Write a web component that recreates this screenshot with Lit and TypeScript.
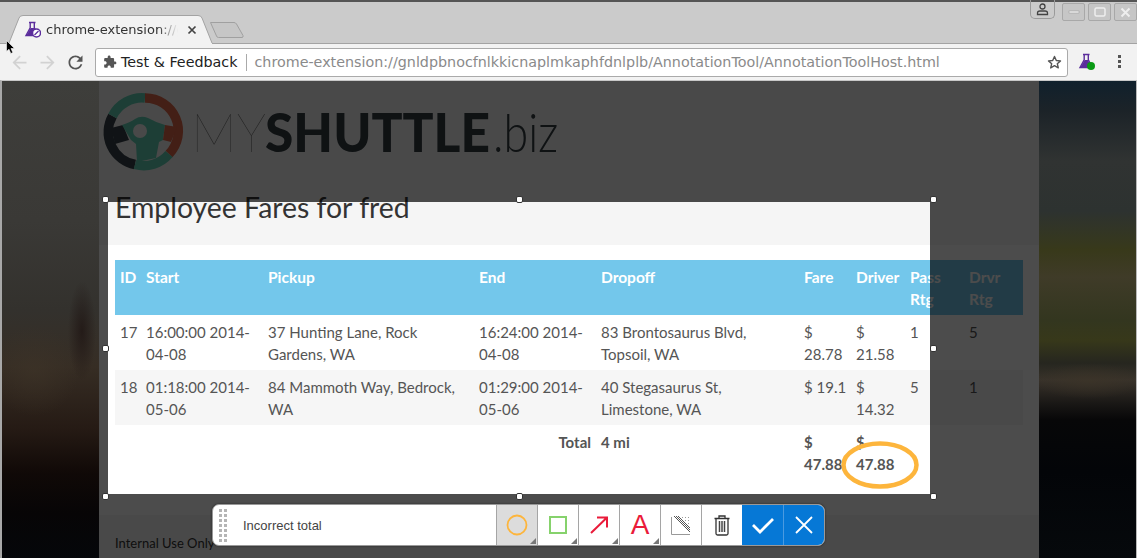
import { LitElement, html, css, svg } from "lit";
import { customElement } from "lit/decorators.js";

const rows = [
  { band: false, id: "17", start: "16:00:00 2014-04-08", pickup: "37 Hunting Lane, Rock Gardens, WA", end: "16:24:00 2014-04-08", drop: "83 Brontosaurus Blvd, Topsoil, WA", fare: "$ 28.78", driver: "$ 21.58", pass: "1", drvr: "5" },
  { band: true, id: "18", start: "01:18:00 2014-05-06", pickup: "84 Mammoth Way, Bedrock, WA", end: "01:29:00 2014-05-06", drop: "40 Stegasaurus St, Limestone, WA", fare: "$ 19.1", driver: "$ 14.32", pass: "5", drvr: "1" },
];

const flask = svg`<path d="M5 1.500h6.500M6.200 1.500v5.300L2 14.500h12.500L10.300 6.800V1.500" fill="none" stroke="#5b2d9c" stroke-width="1.400"/><path d="M6.700 7h3.100l4.700 8H2z" fill="#5b2d9c"/>`;

@customElement("app-root")
export class AppRoot extends LitElement {
  static styles = css`
    :host { display: block; width: 1137px; height: 558px; overflow: hidden; position: relative; font-family: "DejaVu Sans", sans-serif; background: #ccc; }
    .frame { display: flex; flex-direction: column; height: 558px; }
    .strip { height: 43px; flex: none; background: #cbcbcb; border-top: 2px solid #555; box-sizing: border-box; display: flex; align-items: flex-end; padding-left: 7px; position: relative; }
    .tab { width: 206px; height: 29px; position: relative; display: flex; align-items: center; box-sizing: border-box; padding: 0 0 0 17px; margin-bottom: -1px; z-index: 1; }
    .tab > svg.shape { position: absolute; left: 0; top: 0; }
    .tab .ticon { position: relative; flex: none; margin-right: 5px; }
    .title { position: relative; font-size: 13px; color: #333; width: 132px; overflow: hidden; white-space: nowrap; -webkit-mask-image: linear-gradient(90deg, #000 85%, transparent); mask-image: linear-gradient(90deg, #000 85%, transparent); }
    .x { position: relative; margin-left: 9px; flex: none; }
    .newtab { margin-left: -4px; margin-bottom: 4px; flex: none; display: block; }
    .winbtns { position: absolute; right: 0; top: -2px; display: flex; gap: 3px; align-items: flex-start; }
    .prof { width: 25px; height: 19px; margin-right: 4px; border: 1px solid #9a9a9a; border-top: none; border-radius: 0 0 5px 5px; box-sizing: border-box; display: flex; align-items: center; justify-content: center; }
    .wb { width: 23px; height: 18px; margin-top: 3px; border: 1px solid #a8a8a8; border-radius: 2px; box-sizing: border-box; background: #c6c6c6; display: flex; align-items: center; justify-content: center; }
    .toolbar { height: 37px; flex: none; background: #f2f2f2; border-top: 1px solid #a3a3a3; box-sizing: border-box; display: flex; align-items: center; padding-left: 9px; }
    .nav { display: block; flex: none; margin-right: 7px; }
    .nav.last { margin-right: 0; }
    .omni { margin-left: 9px; width: 973px; height: 29px; flex: none; background: #fff; border: 1px solid #aaa; border-radius: 3px; box-sizing: border-box; display: flex; align-items: center; padding: 0 5px 0 7px; font-size: 14.3px; white-space: nowrap; }
    .site { color: #222; margin-left: 4px; }
    .sep { width: 1px; height: 17px; background: #aaa; margin: 0 7px 0 9px; flex: none; }
    .url { color: #8a8a8a; flex: 1; }
    .ext { margin-left: 10px; flex: none; display: block; }
    .menu { margin-left: 22px; flex: none; display: block; }
    .stage { flex: 1; display: flex; min-height: 0; background: #000; border-left: 2px solid #a8a8a8; border-right: 1px solid #b8b8b8; border-top: 1px solid #c8c8c8; }
    .side { flex: none; }
    .left { width: 97px; background:
      radial-gradient(ellipse 14px 50px at 80px 250px, rgba(30,20,18,.75), transparent),
      radial-gradient(ellipse 45px 45px at 32px 290px, rgba(62,52,40,.6), transparent),
      linear-gradient(180deg, #3e3e3b 0, #3a3936 140px, #33312d 229px, #362d24 286px, #251a14 349px, #100907 392px, #070506 432px, #05070a 477px); }
    .right { flex: 1; background:
      radial-gradient(ellipse 55px 18px at 50px 300px, rgba(60,52,40,.7), transparent),
      linear-gradient(180deg, #10202c 0, #1c2328 30px, #303332 80px, #2d3230 130px, #38391a 169px, #3f3b28 196px, #33361f 239px, #37381a 259px, #26261f 282px, #38322a 299px, #1a1816 322px, #070708 339px, #030508 390px, #06090c 477px); }
    .page { width: 940px; flex: none; position: relative; overflow: hidden; background: #fff; color: #555; font-family: "Lato", sans-serif; font-size: 15px; line-height: 22px; }
    .band { background: #f5f5f5; height: 164px; box-sizing: border-box; padding: 11px 0 0 4px; }
    .logo { display: block; }
    h1 { margin: 14px 0 0 12px; font-weight: 400; font-size: 28.4px; line-height: 34px; color: #333; }
    .content { padding: 15px 16px 0; }
    table { border-collapse: collapse; table-layout: fixed; width: 908px; }
    th { background: #73c7eb; color: #fff; text-align: left; font-weight: 700; height: 55px; font-size: 15.5px; }
    th, td { padding: 6px 5px 5px; vertical-align: top; box-sizing: border-box; }
    td.fare { padding-right: 2px; }
    tr.alt td { background: #f6f6f6; }
    .num { text-align: right; }
    .b { font-weight: 700; }
    .footer { position: absolute; left: 0; right: 0; top: 434px; bottom: 0; background: #f5f5f5; padding: 17px 16px 0; color: #333; font-size: 13px; }
    .cut { position: absolute; left: 9px; top: 121px; width: 822px; height: 292px; box-shadow: 0 0 0 1400px rgba(0,0,0,.7); }
    .h { position: absolute; width: 7px; height: 7px; box-sizing: border-box; background: #fff; border: 1.5px solid #333; border-radius: 2px; }
    .hl { left: -6px; } .hc { left: 408px; } .hr { left: 822px; }
    .ht { top: -6px; } .hm { top: 143px; } .hb { top: 291px; }
    .ell { position: absolute; left: 733px; top: 239px; display: block; }
    .tools { position: absolute; left: 113px; top: 423px; width: 613px; height: 42px; box-sizing: border-box; border: 1px solid #999; border-radius: 7px; background: #fff; box-shadow: 0 0 2px #222; display: flex; overflow: hidden; font-family: "Liberation Sans", sans-serif; }
    .grip { width: 30px; flex: none; display: grid; grid-template-columns: 3px 3px; grid-auto-rows: 3px; gap: 2px 2px; padding: 4px 0 0 6px; box-sizing: border-box; align-content: start; }
    .grip i { background: #b5b5b5; display: block; }
    .note { width: 253px; flex: none; font-size: 13px; line-height: 41px; color: #444; }
    .cell { width: 41px; flex: none; border-left: 1px solid #a5a5a5; box-sizing: border-box; position: relative; display: flex; align-items: center; justify-content: center; }
    .cell.on { background: #dcdcdc; }
    .cell.more::after { content: ""; position: absolute; right: 1px; bottom: 1px; border-style: solid; border-width: 0 0 6px 6px; border-color: transparent transparent #777 transparent; }
    .cell.blue { background: #0678d6; border-left-color: #4a9ae0; }
    .cell.first { border-left: none; }
    .letter { font-size: 28px; line-height: 40px; color: #ea1b3a; }
    .cursor { position: absolute; left: 6px; top: 40px; display: block; z-index: 5; }
  `;

  render() {
    const grip = Array.from({ length: 14 }, () => html`<i></i>`);
    return html`
      <div class="frame">
        <div class="strip">
          <div class="tab">
            <svg class="shape" width="206" height="29"><path d="M0 29 L2 28 L12 3 Q13 .5 16 .5 H191 Q194 .5 195 3 L205 28 L206 29 Z" fill="#f2f2f2" stroke="#a3a3a3"/><rect x="1" y="28" width="204" height="2" fill="#f2f2f2"/></svg>
            <svg class="ticon" width="17" height="17" viewBox="0 0 17 17">${flask}<circle cx="12.500" cy="12" r="4" fill="#fff" stroke="#5b2d9c" stroke-width="1.500"/><path d="M10.500 14 14.500 10" stroke="#5b2d9c" stroke-width="1.200"/></svg>
            <span class="title">chrome-extension://gnldpb</span>
            <svg class="x" width="10" height="10" viewBox="0 0 10 10"><path d="M1.500 1.500l7 7M8.500 1.500l-7 7" stroke="#444" stroke-width="1.700"/></svg>
          </div>
          <svg class="newtab" width="36" height="18" viewBox="0 0 36 18"><path d="M1.500 1.500H25Q26.500 1.500 27.500 3L34 14.500Q34.500 16.500 33 16.500H9.500Q8 16.500 7.500 15Z" fill="#c6c6c6" stroke="#a0a0a0"/></svg>
          <div class="winbtns">
            <div class="prof"><svg width="13" height="13" viewBox="0 0 13 13"><circle cx="6.500" cy="3.500" r="2.500" fill="none" stroke="#444" stroke-width="1.300"/><path d="M1.500 11.500V10Q1.500 8 4 8H9Q11.500 8 11.500 10V11.500Z" fill="none" stroke="#444" stroke-width="1.300"/></svg></div>
            <div class="wb"><svg width="12" height="4"><rect x="1" y="1" width="10" height="2" fill="#eee" stroke="#999" stroke-width=".5"/></svg></div>
            <div class="wb"><svg width="12" height="10"><rect x="1" y="1" width="10" height="8" rx="1.500" fill="none" stroke="#eee" stroke-width="1.500"/></svg></div>
            <div class="wb"><svg width="11" height="11"><path d="M1.500 1.500l8 8M9.500 1.500l-8 8" stroke="#eee" stroke-width="2"/></svg></div>
          </div>
        </div>
        <div class="toolbar">
          <svg class="nav" width="21" height="21" viewBox="0 0 24 24"><path fill="#d2d2d2" d="M20 11H7.830l5.590-5.590L12 4l-8 8 8 8 1.410-1.410L7.830 13H20v-2z"/></svg>
          <svg class="nav" width="21" height="21" viewBox="0 0 24 24"><path fill="#d2d2d2" d="M4 11h12.170l-5.590-5.590L12 4l8 8-8 8-1.410-1.410L16.170 13H4v-2z"/></svg>
          <svg class="nav last" width="21" height="21" viewBox="0 0 24 24"><path fill="#555" d="M17.650 6.350C16.200 4.900 14.210 4 12 4c-4.420 0-7.990 3.580-7.990 8s3.570 8 7.990 8c3.730 0 6.840-2.550 7.730-6h-2.080c-.82 2.330-3.040 4-5.650 4-3.310 0-6-2.690-6-6s2.690-6 6-6c1.660 0 3.140.69 4.220 1.780L13 11h7V4l-2.350 2.350z"/></svg>
          <div class="omni">
            <svg width="14" height="14" viewBox="0 0 24 24"><path fill="#555" d="M20.500 11H19V7c0-1.100-.9-2-2-2h-4V3.500C13 2.120 11.880 1 10.500 1S8 2.120 8 3.500V5H4c-1.100 0-1.990.9-1.990 2v3.800H3.500c1.490 0 2.700 1.210 2.700 2.700s-1.210 2.700-2.700 2.700H2V20c0 1.100.9 2 2 2h3.800v-1.500c0-1.490 1.210-2.700 2.700-2.700 1.490 0 2.700 1.210 2.700 2.700V22H17c1.100 0 2-.9 2-2v-4h1.500c1.380 0 2.500-1.120 2.500-2.500S21.880 11 20.500 11z"/></svg>
            <span class="site">Test &amp; Feedback</span><span class="sep"></span>
            <span class="url">chrome-extension://gnldpbnocfnlkkicnaplmkaphfdnlplb/AnnotationTool/AnnotationToolHost.html</span>
            <svg width="15" height="15" viewBox="0 0 15 15"><path d="M7.500 1.500l1.800 4 4.200.4-3.200 2.800 1 4.200-3.800-2.300-3.800 2.300 1-4.200L1.500 5.900l4.200-.4z" fill="none" stroke="#555" stroke-width="1.400" stroke-linejoin="round"/></svg>
          </div>
          <svg class="ext" width="18" height="18" viewBox="0 0 18 18">${flask}<circle cx="13" cy="13" r="4" fill="#0a9a14"/></svg>
          <svg class="menu" width="4" height="14" viewBox="0 0 4 14"><g fill="#555"><rect x="0" y="0" width="3" height="3"/><rect x="0" y="5" width="3" height="3"/><rect x="0" y="10" width="3" height="3"/></g></svg>
        </div>
        <div class="stage">
          <div class="side left"></div>
          <div class="page">
            <div class="band">
              <svg class="logo" width="470" height="84" viewBox="0 0 470 84">
                <g fill="none" stroke-width="9.500">
                  <path d="M32 72.500 A 33 33 0 0 1 9.500 24" stroke="#37424a"/>
                  <path d="M9.500 24 A 33 33 0 0 1 42 6" stroke="#62d0b4"/>
                  <path d="M42 6 A 33 33 0 0 1 66 62" stroke="#e0684a"/>
                  <path d="M66 62 A 33 33 0 0 1 32 72.500" stroke="#62d0b4"/>
                </g>
                <path d="M8 36 L20 33 L26 48 L12 52Z" fill="#37424a"/>
                <path d="M19 33 Q28 30 32 27 Q38 23 45 26 Q52 30 62 33 L60 48 L56 50 L53 66 L34 70 L33 52 L28 48 Z" fill="#62d0b4"/>
                <path d="M62 33 L74 35 L68 50 L60 48 Z" fill="#e0684a"/>
                <circle cx="37" cy="39" r="7" fill="#f5f5f5"/>
                <text x="88" y="60" font-family="Lato" font-weight="100" font-size="54" fill="#777" textLength="75" lengthAdjust="spacingAndGlyphs">MY</text>
                <text x="162" y="60" font-family="Lato" font-weight="900" font-size="54" fill="#333c42" textLength="225" lengthAdjust="spacingAndGlyphs">SHUTTLE</text>
                <text x="390" y="60" font-family="Lato" font-weight="300" font-size="54" fill="#333c42" textLength="65" lengthAdjust="spacingAndGlyphs">.biz</text>
              </svg>
              <h1>Employee Fares for fred</h1>
            </div>
            <div class="content">
              <table>
                <colgroup><col width="26"><col width="122"><col width="211"><col width="122"><col width="203"><col width="52"><col width="54"><col width="59"><col width="59"></colgroup>
                <tr><th>ID</th><th>Start</th><th>Pickup</th><th>End</th><th>Dropoff</th><th>Fare</th><th>Driver</th><th>Pass Rtg</th><th>Drvr Rtg</th></tr>
                ${rows.map(r => html`<tr class=${r.band ? "alt" : ""}><td>${r.id}</td><td>${r.start}</td><td>${r.pickup}</td><td>${r.end}</td><td>${r.drop}</td><td class="fare">${r.fare}</td><td>${r.driver}</td><td>${r.pass}</td><td>${r.drvr}</td></tr>`)}
                <tr class="b"><td colspan="4" class="num">Total</td><td>4 mi</td><td>$ 47.88</td><td>$ 47.88</td><td></td><td></td></tr>
              </table>
            </div>
            <div class="footer">Internal Use Only</div>
            <div class="cut">
              <svg class="ell" width="78" height="48" viewBox="0 0 78 48"><ellipse cx="39" cy="24" rx="36.500" ry="21.500" fill="none" stroke="#fdb53c" stroke-width="4.500"/></svg>
              ${["hl ht", "hc ht", "hr ht", "hl hm", "hr hm", "hl hb", "hc hb", "hr hb"].map(c => html`<span class="h ${c}"></span>`)}
            </div>
            <div class="tools">
              <div class="grip">${grip}</div>
              <div class="note">Incorrect total</div>
              <div class="cell on more"><svg width="24" height="24"><circle cx="12" cy="12" r="9.500" fill="none" stroke="#fdb53c" stroke-width="1.800"/></svg></div>
              <div class="cell more"><svg width="22" height="22"><rect x="3" y="3" width="16" height="16" fill="none" stroke="#86d26c" stroke-width="2"/></svg></div>
              <div class="cell more"><svg width="22" height="22"><path d="M3 19 L19 3.500M9 3.500H19V13.500" fill="none" stroke="#ea1b3a" stroke-width="2"/></svg></div>
              <div class="cell more"><span class="letter">A</span></div>
              <div class="cell">
                <svg width="22" height="22" viewBox="0 0 22 22">
                  <defs>
                    <pattern id="dith" width="2" height="2" patternUnits="userSpaceOnUse"><rect width="1" height="1" fill="#555"/><rect x="1" y="1" width="1" height="1" fill="#555"/></pattern>
                    <pattern id="spar" width="3" height="3" patternUnits="userSpaceOnUse"><rect width="1" height="1" fill="#999"/></pattern>
                  </defs>
                  <path d="M3 2H9L20 13V19Z" fill="url(#dith)"/><path d="M9 2H20V13Z" fill="url(#spar)"/>
                  <path d="M1.500 3V20.500H20" fill="none" stroke="#999" stroke-width="1"/>
                </svg>
              </div>
              <div class="cell">
                <svg width="18" height="22" viewBox="0 0 18 22"><path d="M1.500 4.500H16.500M6 4.500V2H12V4.500M3 4.500V19.500Q3 21 4.500 21H13.500Q15 21 15 19.500V4.500" fill="none" stroke="#333" stroke-width="1.300"/><path d="M6.500 7V18M9 7V18M11.500 7V18" stroke="#444" stroke-width="1.500"/></svg>
              </div>
              <div class="cell blue first"><svg width="24" height="18"><path d="M2 9 L9 16 L22 3" fill="none" stroke="#fff" stroke-width="2.800"/></svg></div>
              <div class="cell blue"><svg width="20" height="20"><path d="M2 2L18 18M18 2L2 18" fill="none" stroke="#fff" stroke-width="1.800"/></svg></div>
            </div>
          </div>
          <div class="side right"></div>
        </div>
      </div>
      <svg class="cursor" width="11" height="15" viewBox="0 0 11 15"><path d="M.5.500V11.500L3 9.200 4.800 13.500 6.800 12.600 5 8.500H8.500Z" fill="#000" stroke="#fff" stroke-width=".6"/></svg>
    `;
  }
}
